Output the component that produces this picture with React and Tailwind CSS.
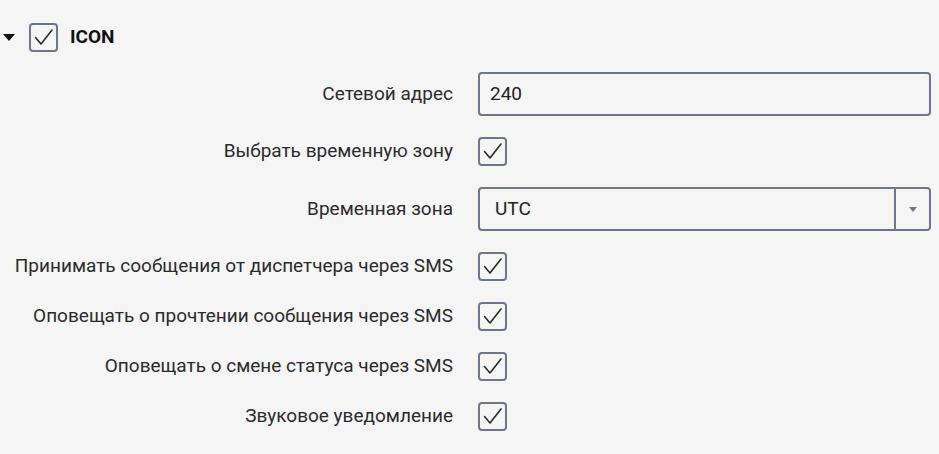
import React from "react";

function Check({ className = "" }) {
  return (
    <div className={"w-[29px] h-[29px] rounded-[4px] border-2 border-[#6f768a] flex items-center justify-center shrink-0 " + className}>
      <svg width="23" height="23" viewBox="0 0 23 23" fill="none">
        <path d="M3.5 11.5 L9 18 L20 4" stroke="#2b2b2b" strokeWidth="1.6" strokeLinecap="round" strokeLinejoin="round" />
      </svg>
    </div>
  );
}

function Row({ label, children }) {
  return (
    <div className="flex items-center">
      <div className="w-[453px] text-right text-[19px] text-[#2b2b2b] whitespace-nowrap">{label}</div>
      <div className="ml-[25px] flex-1 flex items-center">{children}</div>
    </div>
  );
}

export default function App() {
  return (
    <div className="w-[939px] h-[454px] bg-[#f5f5f5] font-['Roboto',sans-serif] pr-[8px]">
      <div className="flex items-center pt-[23px] pl-[3px]">
        <svg width="12" height="7" viewBox="0 0 12 7"><path d="M0 0 L12 0 L6 7 Z" fill="#111" /></svg>
        <Check className="ml-[14px]" />
        <span className="ml-[12px] text-[19px] font-bold text-[#111]">ICON</span>
      </div>
      <div className="flex flex-col gap-[21px] mt-[20px]">
        <Row label="Сетевой адрес">
          <div className="h-[44px] w-full rounded-[4px] border-2 border-[#6f768a] flex items-center px-[10px] text-[19px] text-[#222]">240</div>
        </Row>
        <Row label="Выбрать временную зону"><Check /></Row>
        <Row label="Временная зона">
          <div className="h-[44px] w-full rounded-[4px] border-2 border-[#6f768a] flex items-center text-[19px] text-[#222]">
            <span className="flex-1 px-[15px]">UTC</span>
            <div className="w-[35px] h-full border-l-2 border-[#6f768a] flex items-center justify-center">
              <svg width="8" height="5" viewBox="0 0 8 5"><path d="M0 0 L8 0 L4 5 Z" fill="#6f768a" /></svg>
            </div>
          </div>
        </Row>
        <Row label="Принимать сообщения от диспетчера через SMS"><Check /></Row>
        <Row label="Оповещать о прочтении сообщения через SMS"><Check /></Row>
        <Row label="Оповещать о смене статуса через SMS"><Check /></Row>
        <Row label="Звуковое уведомление"><Check /></Row>
      </div>
    </div>
  );
}
